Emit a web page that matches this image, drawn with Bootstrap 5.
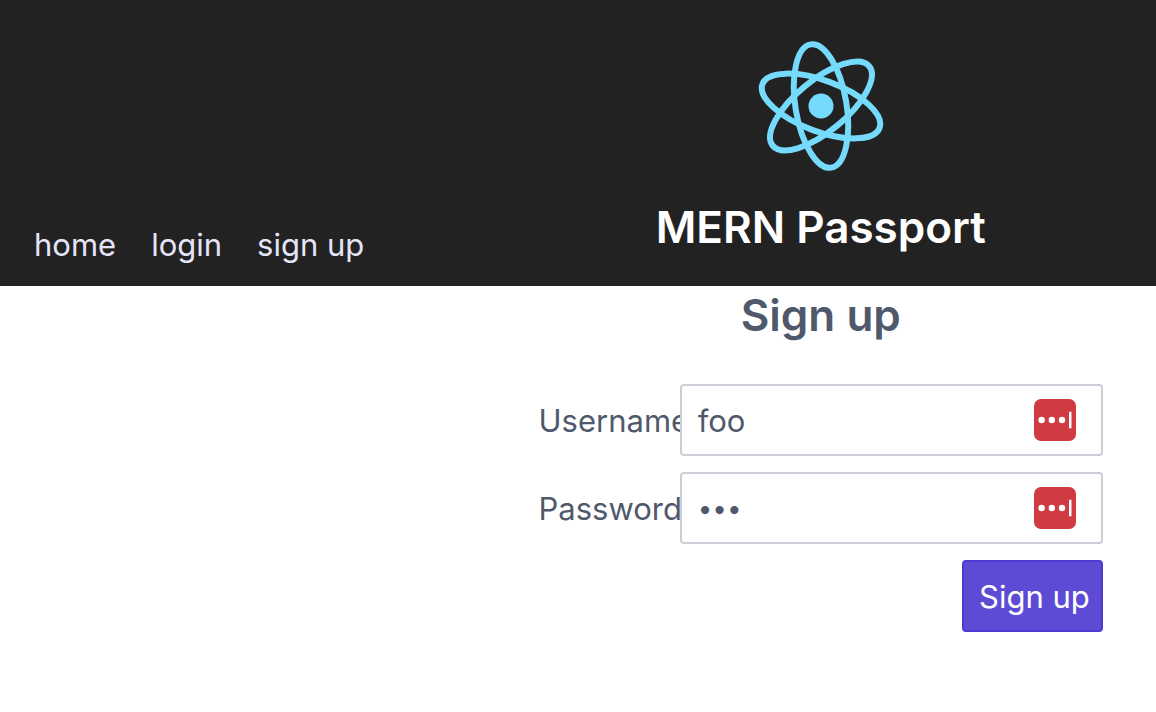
<!DOCTYPE html>
<html lang="en">
<head>
<meta charset="utf-8">
<meta name="viewport" content="width=device-width, initial-scale=1">
<title>MERN Passport</title>
<link href="https://cdn.jsdelivr.net/npm/bootstrap@5.3.0/dist/css/bootstrap.min.css" rel="stylesheet">
<style>
body { font-family: Inter, "Liberation Sans", sans-serif; font-size: 31px; line-height: 40px; color: #50596c; background: #fff; }
.app-header { background: #222; color: #fff; }
.side { flex: 0 0 42%; }
.site-nav { padding: 0 34px 21px; gap: 35px; }
.site-nav a { color: #e5e5f9; text-decoration: none; }
.brand { padding: 40px 0 30px; }
.brand svg { width: 132px; height: 132px; }
h1, h2 { font-size: 44px; line-height: 58px; font-weight: 600; }
h1 { margin: 26px 0 0; }
h2 { margin: 0 0 40px; }
.signup { padding: 0 53px; }
.form-rows { gap: 16px; }
.form-rows label { white-space: nowrap; padding: 17px 0 15px; }
.form-rows .form-control { font-size: 31px; line-height: 40px; height: 72px; padding: 14px 16px; border: 2px solid #caced7; border-radius: 4px; color: #50596c; }
.form-rows [type=password] { font-size: 26px; }
.fill-icon { top: 14px; right: 26px; width: 44px; height: 44px; }
.signup .btn-send { font-size: 31px; line-height: 40px; padding: 15px 0 13px 4px; color: #fff; background: #5e4bd5; border: 2px solid #5138cf; border-radius: 4px; }
</style>
</head>
<body>
<header class="app-header d-flex">
  <nav class="side site-nav d-flex align-items-end">
    <a href="#">home</a>
    <a href="#">login</a>
    <a href="#">sign up</a>
  </nav>
  <div class="brand flex-fill text-center">
    <svg class="d-block mx-auto" viewBox="-66 -66 132 132" aria-hidden="true">
      <circle r="12.5" fill="#75dafc"/>
      <g fill="none" stroke="#75dafc" stroke-width="6">
        <ellipse rx="62.500" ry="25.500" transform="rotate(20.500)"/>
        <ellipse rx="62.500" ry="25.500" transform="rotate(80.500)"/>
        <ellipse rx="62.500" ry="25.500" transform="rotate(140.500)"/>
      </g>
    </svg>
    <h1>MERN Passport</h1>
  </div>
</header>
<main class="d-flex">
  <div class="side"></div>
  <section class="signup flex-fill">
    <h2 class="text-center">Sign up</h2>
    <form class="form-rows d-flex flex-column">
      <div class="row g-0">
        <label class="col-3" for="username">Username</label>
        <div class="col-9 position-relative">
          <input class="form-control" id="username" type="text" value="foo">
          <svg class="fill-icon position-absolute" viewBox="0 0 44 44" aria-hidden="true">
            <rect x="1" y="1" width="42" height="42" rx="7" fill="#d03a41"/>
            <g fill="#fff"><circle cx="8.600" cy="22" r="3.200"/><circle cx="18.800" cy="22" r="3.200"/><circle cx="29" cy="22" r="3.200"/><rect x="36" y="13.500" width="2.500" height="17" rx="1.200"/></g>
          </svg>
        </div>
      </div>
      <div class="row g-0">
        <label class="col-3" for="password">Password</label>
        <div class="col-9 position-relative">
          <input class="form-control" id="password" type="password" value="foo">
          <svg class="fill-icon position-absolute" viewBox="0 0 44 44" aria-hidden="true">
            <rect x="1" y="1" width="42" height="42" rx="7" fill="#d03a41"/>
            <g fill="#fff"><circle cx="8.600" cy="22" r="3.200"/><circle cx="18.800" cy="22" r="3.200"/><circle cx="29" cy="22" r="3.200"/><rect x="36" y="13.500" width="2.500" height="17" rx="1.200"/></g>
          </svg>
        </div>
      </div>
      <div class="row g-0 justify-content-end">
        <button class="btn btn-send col-3" type="submit">Sign up</button>
      </div>
    </form>
  </section>
</main>
<script src="https://cdn.jsdelivr.net/npm/bootstrap@5.3.0/dist/js/bootstrap.bundle.min.js"></script>
</body>
</html>
